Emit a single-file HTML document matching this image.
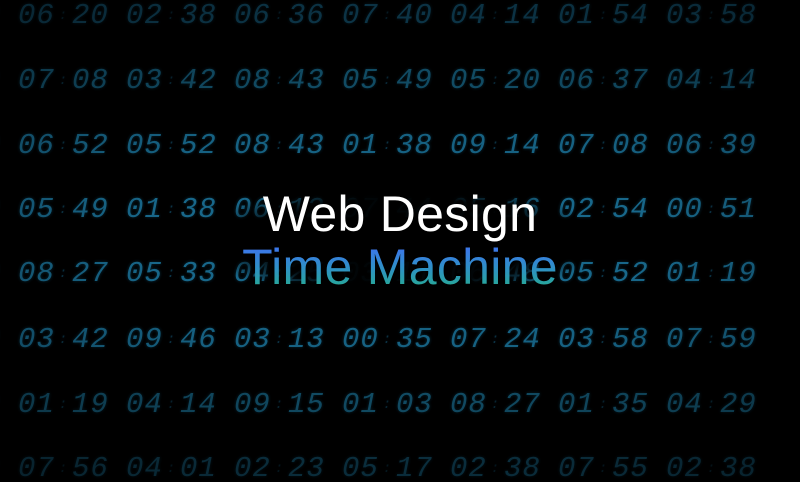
<!DOCTYPE html>
<html><head><meta charset="utf-8"><style>
html,body{margin:0;padding:0;background:#000;}
#s{position:relative;width:800px;height:482px;overflow:hidden;background:#000;font-family:"Liberation Mono",monospace;}
.t{position:absolute;width:92px;height:26px;color:#1b7399;font-size:29px;line-height:26px;font-style:italic;white-space:nowrap;text-shadow:0 0 3px rgba(30,140,190,.4);}
.t b{font-weight:normal;display:inline-block;width:36px;letter-spacing:1px;}
.t i{display:inline-block;width:18px;text-align:center;font-size:14px;opacity:.5;vertical-align:top;}
#ov{position:absolute;inset:0;background:radial-gradient(ellipse 75% 85% at 50% 48%,rgba(0,0,0,0) 40%,rgba(0,0,0,.45) 100%);}
#tb{position:absolute;left:225px;top:185px;width:350px;height:112px;background:radial-gradient(ellipse at center,rgba(0,0,0,.95) 55%,rgba(0,0,0,0) 80%);}
.h{position:absolute;left:0;width:800px;text-align:center;font-family:"Liberation Sans",sans-serif;font-size:50px;line-height:50px;letter-spacing:.3px;}
#h1{top:189px;color:#fff;}
#h2{top:242px;background:linear-gradient(180deg,#3b78e8 15%,#2f8fc8 50%,#27a896 90%);-webkit-background-clip:text;background-clip:text;color:transparent;}
</style></head><body><div id="s">
<script>
var rows=[
["06:20","02:38","06:36","07:40","04:14","01:54","03:58"],
["07:08","03:42","08:43","05:49","05:20","06:37","04:14"],
["06:52","05:52","08:43","01:38","09:14","07:08","06:39"],
["05:49","01:38","06:12","07:44","05:16","02:54","00:51"],
["08:27","05:33","04:25","03:11","06:48","05:52","01:19"],
["03:42","09:46","03:13","00:35","07:24","03:58","07:59"],
["01:19","04:14","09:15","01:03","08:27","01:35","04:29"],
["07:56","04:01","02:23","05:17","02:38","07:55","02:38"]];
var ys=[3,68,133,197,261,327,392,456];
var op=[.5,.65,.85,.9,.9,.85,.65,.45];
var h="";
for(var r=0;r<8;r++){for(var c=0;c<7;c++){var v=rows[r][c].split(":");
h+='<div class="t" style="left:'+(18+c*108)+'px;top:'+ys[r]+'px;opacity:'+op[r]+'"><b>'+v[0]+'</b><i>:</i><b>'+v[1]+'</b></div>';}
h+='<div class="t" style="left:-90px;top:'+ys[r]+'px;opacity:'+op[r]*0.5+'"><b>00</b><i>:</i><b>10</b></div>';}
document.write(h);
</script>
<div id="ov"></div>
<div id="tb"></div>
<div class="h" id="h1">Web Design</div>
<div class="h" id="h2">Time Machine</div>
</div></body></html>
